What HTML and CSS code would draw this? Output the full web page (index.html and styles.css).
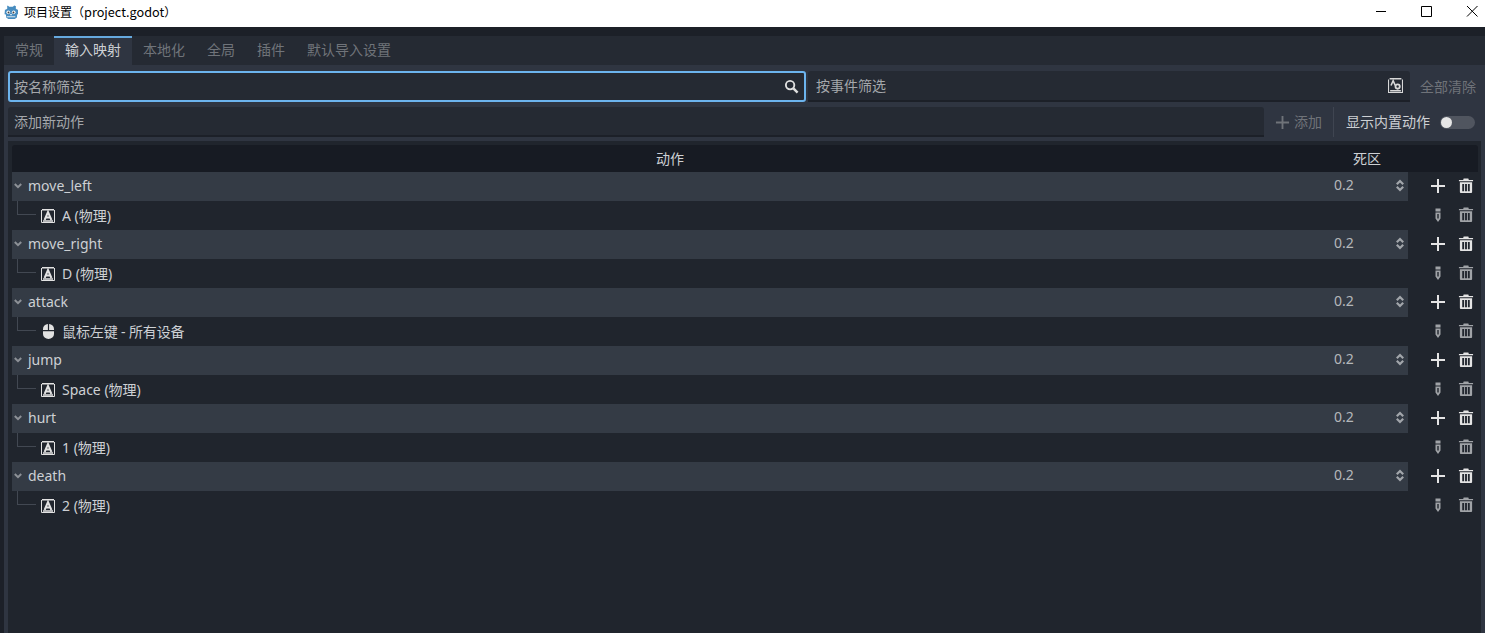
FILE: index.html
```html
<!DOCTYPE html>
<html lang="zh">
<head>
<meta charset="utf-8">
<title>项目设置</title>
<link rel="stylesheet" href="styles.css">
</head>
<body>
<svg class="defs" width="0" height="0" aria-hidden="true">
  <defs>
    <symbol id="key" viewBox="0 0 14 14">
      <path d="M.5 1v12.500h13V1" fill="none" stroke="currentColor" stroke-width="1"/>
      <path d="M1 .7h12M2 12h10" fill="none" stroke="currentColor" stroke-width="1.400"/>
      <path d="M3.600 11L7 3 10.400 11M5 8.400h4" fill="none" stroke="currentColor" stroke-width="2"/>
    </symbol>
    <symbol id="plus" viewBox="0 0 16 16">
      <path d="M8 1v14M1 8h14" fill="none" stroke="currentColor" stroke-width="2"/>
    </symbol>
    <symbol id="trash" viewBox="-.5 0 17 16">
      <path fill="currentColor" fill-rule="evenodd" d="M5.500 0h5l.5 1.500h4.500V3H.5V1.500H5zM1.500 4h13v10.500a1 1 0 0 1-1 1h-11a1 1 0 0 1-1-1zM4 6v7.500h2V6zM7 6v7.500h2V6zM10 6v7.500h2V6z"/>
    </symbol>
    <symbol id="pencil" viewBox="0 0 16 16">
      <path fill="currentColor" fill-rule="evenodd" d="M5.500 1.500h5v3h-5zM5.500 5.500h5v6L8 15l-2.500-3.500zM7.300 7v4.500h1.400V7z"/>
    </symbol>
    <symbol id="chev" viewBox="0 0 8 6">
      <path d="M.8 1l3.200 3.200L7.200 1" fill="none" stroke="currentColor" stroke-width="2"/>
    </symbol>
    <symbol id="updown" viewBox="0 0 8 13">
      <path d="M.8 5.200L4 2l3.200 3.200M.8 7.800L4 11l3.200-3.200" fill="none" stroke="currentColor" stroke-width="2.200"/>
    </symbol>
  </defs>
</svg>

<header class="titlebar">
  <div class="title-left">
    <svg class="godot" viewBox="1.500 1 13 13" aria-hidden="true">
      <path fill="#478cbf" d="M5 1.500l1.300 1.200h3.400L11 1.500l1.600.7-.2 2 1.400 1.200.8-.2.400 4.300-1.300.4-.2 2.600-2 1.500H5.500l-2-1.500-.2-2.600L2 9.500l.4-4.300.8.200 1.400-1.200-.2-2z"/>
      <circle cx="5.500" cy="7.800" r="1.700" fill="#fff"/>
      <circle cx="10.500" cy="7.800" r="1.700" fill="#fff"/>
      <circle cx="5.700" cy="8" r=".9" fill="#414042"/>
      <circle cx="10.300" cy="8" r=".9" fill="#414042"/>
      <path d="M7.200 9.300h1.600v1.300H7.200zM4 11.500h8v.8H4z" fill="#dfe9f2"/>
    </svg>
    <span class="title-text">项目设置（<span class="title-latin">project.godot</span>）</span>
  </div>
  <div class="win-btns">
    <svg class="win-btn" viewBox="0 0 45 27" aria-hidden="true"><path d="M26 11.500h10" stroke="#000" fill="none"/></svg>
    <svg class="win-btn" viewBox="0 0 45 27" aria-hidden="true"><path d="M26.500 6.500h10v10h-10z" stroke="#000" fill="none"/></svg>
    <svg class="win-btn" viewBox="0 0 45 27" aria-hidden="true"><path d="M27 6l10.500 10.500M37.500 6L27 16.500" stroke="#000" fill="none"/></svg>
  </div>
</header>

<main class="app">
  <nav class="tabs">
    <span class="tab tab-first">常规</span>
    <span class="tab tab-active">输入映射</span>
    <span class="tab">本地化</span>
    <span class="tab">全局</span>
    <span class="tab">插件</span>
    <span class="tab">默认导入设置</span>
  </nav>
  <section class="panel">
    <div class="filters">
      <div class="field field-focus">
        <span class="ph">按名称筛选</span>
        <svg class="search-icon" viewBox="0 0 16 16" aria-hidden="true"><circle cx="6.500" cy="6.500" r="4.500" fill="none" stroke="currentColor" stroke-width="2"/><path d="M10 10l4.500 4.500" stroke="currentColor" stroke-width="2.600" fill="none"/></svg>
      </div>
      <div class="field field-event">
        <span class="ph">按事件筛选</span>
        <svg class="event-icon" viewBox="0 0 14 14" aria-hidden="true"><path d="M.5 1.500v12h13v-12" fill="none" stroke="currentColor"/><path d="M1.500.7h11M2 12h10" fill="none" stroke="currentColor" stroke-width="1.400"/><path d="M2.800 7L4.800 2.500 6.800 7" fill="none" stroke="currentColor" stroke-width="1.500"/><circle cx="9" cy="8" r="2" fill="none" stroke="currentColor" stroke-width="1.700"/></svg>
      </div>
      <span class="clear-all">全部清除</span>
    </div>
    <div class="add-row">
      <div class="field field-add"><span class="ph">添加新动作</span></div>
      <span class="add-btn"><svg class="add-plus" aria-hidden="true"><use href="#plus"/></svg>添加</span>
      <span class="sep"></span>
      <span class="builtin">显示内置动作</span>
      <span class="toggle"><span class="knob"></span></span>
    </div>
    <div class="tree">
      <div class="tree-head"><span class="h-action">动作</span><span class="h-dead">死区</span></div>

      <div class="row row-action">
        <div class="cell-main"><svg class="chev" aria-hidden="true"><use href="#chev"/></svg><span>move_left</span><span class="dz">0.2</span><svg class="updown" aria-hidden="true"><use href="#updown"/></svg></div>
        <div class="btns"><svg class="bi" aria-hidden="true"><use href="#plus"/></svg><svg class="bi" aria-hidden="true"><use href="#trash"/></svg></div>
      </div>
      <div class="row row-event">
        <div class="cell-sub"><span class="guide"></span><svg class="key" aria-hidden="true"><use href="#key"/></svg><span>A (物理)</span></div>
        <div class="btns dim"><svg class="bi" aria-hidden="true"><use href="#pencil"/></svg><svg class="bi" aria-hidden="true"><use href="#trash"/></svg></div>
      </div>

      <div class="row row-action">
        <div class="cell-main"><svg class="chev" aria-hidden="true"><use href="#chev"/></svg><span>move_right</span><span class="dz">0.2</span><svg class="updown" aria-hidden="true"><use href="#updown"/></svg></div>
        <div class="btns"><svg class="bi" aria-hidden="true"><use href="#plus"/></svg><svg class="bi" aria-hidden="true"><use href="#trash"/></svg></div>
      </div>
      <div class="row row-event">
        <div class="cell-sub"><span class="guide"></span><svg class="key" aria-hidden="true"><use href="#key"/></svg><span>D (物理)</span></div>
        <div class="btns dim"><svg class="bi" aria-hidden="true"><use href="#pencil"/></svg><svg class="bi" aria-hidden="true"><use href="#trash"/></svg></div>
      </div>

      <div class="row row-action">
        <div class="cell-main"><svg class="chev" aria-hidden="true"><use href="#chev"/></svg><span>attack</span><span class="dz">0.2</span><svg class="updown" aria-hidden="true"><use href="#updown"/></svg></div>
        <div class="btns"><svg class="bi" aria-hidden="true"><use href="#plus"/></svg><svg class="bi" aria-hidden="true"><use href="#trash"/></svg></div>
      </div>
      <div class="row row-event">
        <div class="cell-sub"><span class="guide"></span><svg class="mouse" viewBox="0 0 11 15" aria-hidden="true"><path fill="currentColor" d="M4.900 0v6H0V5a5 5 0 0 1 4.900-5zM6.100 0A5 5 0 0 1 11 5v1H6.100zM0 7.200h11V10a5.500 5 0 0 1-11 0z"/></svg><span class="mouse-label">鼠标左键 - 所有设备</span></div>
        <div class="btns dim"><svg class="bi" aria-hidden="true"><use href="#pencil"/></svg><svg class="bi" aria-hidden="true"><use href="#trash"/></svg></div>
      </div>

      <div class="row row-action">
        <div class="cell-main"><svg class="chev" aria-hidden="true"><use href="#chev"/></svg><span>jump</span><span class="dz">0.2</span><svg class="updown" aria-hidden="true"><use href="#updown"/></svg></div>
        <div class="btns"><svg class="bi" aria-hidden="true"><use href="#plus"/></svg><svg class="bi" aria-hidden="true"><use href="#trash"/></svg></div>
      </div>
      <div class="row row-event">
        <div class="cell-sub"><span class="guide"></span><svg class="key" aria-hidden="true"><use href="#key"/></svg><span>Space (物理)</span></div>
        <div class="btns dim"><svg class="bi" aria-hidden="true"><use href="#pencil"/></svg><svg class="bi" aria-hidden="true"><use href="#trash"/></svg></div>
      </div>

      <div class="row row-action">
        <div class="cell-main"><svg class="chev" aria-hidden="true"><use href="#chev"/></svg><span>hurt</span><span class="dz">0.2</span><svg class="updown" aria-hidden="true"><use href="#updown"/></svg></div>
        <div class="btns"><svg class="bi" aria-hidden="true"><use href="#plus"/></svg><svg class="bi" aria-hidden="true"><use href="#trash"/></svg></div>
      </div>
      <div class="row row-event">
        <div class="cell-sub"><span class="guide"></span><svg class="key" aria-hidden="true"><use href="#key"/></svg><span>1 (物理)</span></div>
        <div class="btns dim"><svg class="bi" aria-hidden="true"><use href="#pencil"/></svg><svg class="bi" aria-hidden="true"><use href="#trash"/></svg></div>
      </div>

      <div class="row row-action">
        <div class="cell-main"><svg class="chev" aria-hidden="true"><use href="#chev"/></svg><span>death</span><span class="dz">0.2</span><svg class="updown" aria-hidden="true"><use href="#updown"/></svg></div>
        <div class="btns"><svg class="bi" aria-hidden="true"><use href="#plus"/></svg><svg class="bi" aria-hidden="true"><use href="#trash"/></svg></div>
      </div>
      <div class="row row-event">
        <div class="cell-sub"><span class="guide"></span><svg class="key" aria-hidden="true"><use href="#key"/></svg><span>2 (物理)</span></div>
        <div class="btns dim"><svg class="bi" aria-hidden="true"><use href="#pencil"/></svg><svg class="bi" aria-hidden="true"><use href="#trash"/></svg></div>
      </div>
    </div>
  </section>
</main>
</body>
</html>
```
FILE: styles.css
```css
* { box-sizing: border-box; }
html, body { margin: 0; height: 100%; overflow: hidden; }
body {
  display: flex;
  flex-direction: column;
  width: 1485px;
  height: 633px;
  font-family: "Noto Sans", "Noto Sans CJK SC", sans-serif;
  font-size: 14px;
  line-height: 20px;
  color: #cdd0d4;
  background: #1c2028;
}
.defs { position: absolute; }

.titlebar {
  flex: 0 0 27px;
  height: 27px;
  background: #fff;
  display: flex;
  justify-content: space-between;
  color: #000;
}
.title-left { display: flex; align-items: center; padding: 0 0 3px 4px; }
.godot { width: 14px; height: 14px; margin-right: 6px; }
.title-text { font-family: "Noto Sans CJK SC", sans-serif; font-size: 12px; white-space: nowrap; }
.title-latin { font-size: 12.7px; }
.win-btns { display: flex; }
.win-btn { width: 45px; height: 27px; }

.app {
  flex: 1;
  min-height: 0;
  display: flex;
  flex-direction: column;
  padding: 9px 0 0 4px;
}
.tabs {
  flex: 0 0 29px;
  display: flex;
  background: #252a33;
}
.tab {
  padding: 4px 11px 0;
  color: #70747a;
  white-space: nowrap;
}
.tab-first { padding-left: 11px; }
.tab-active {
  background: #2f3541;
  border-top: 2px solid #66a9de;
  padding-top: 2px;
  color: #cdd0d4;
}

.panel {
  flex: 1;
  min-height: 0;
  background: #2f3541;
  display: flex;
  flex-direction: column;
  padding: 6px 4px 0;
}
.filters { flex: 0 0 31px; display: flex; }
.field {
  display: flex;
  align-items: center;
  justify-content: space-between;
  background: #252a33;
  border-radius: 3px 3px 0 0;
  border-bottom: 2px solid #1c2028;
  padding: 0 6px;
  color: #a4a7ab;
}
.field-focus {
  width: 798px;
  border: 2px solid #6cb4ee;
  border-radius: 3px;
  padding: 0 5px 0 4px;
  color: #a4a7ab;
}
.search-icon { width: 15px; height: 15px; color: #e0e0e0; }
.field-event { width: 602px; margin-left: 2px; padding-left: 8px; padding-right: 7px; }
.event-icon { width: 15px; height: 15px; color: #d8d8d8; }
.clear-all { margin-left: 10px; color: #6f7379; line-height: 31px; white-space: nowrap; }

.add-row { flex: 0 0 30px; display: flex; align-items: center; margin-top: 5px; }
.field-add { width: 1256px; height: 30px; padding-top: 2px; }
.add-btn { display: flex; align-items: center; margin-left: 11px; color: #6f7379; white-space: nowrap; }
.add-plus { width: 15px; height: 15px; margin-right: 4px; }
.sep { width: 1px; height: 30px; background: #3f4551; margin-left: 11px; }
.builtin { margin-left: 12px; white-space: nowrap; color: #cdd0d4; }
.toggle {
  width: 35px;
  height: 13px;
  border-radius: 7px;
  background: #50555f;
  margin-left: 10px;
  display: flex;
  align-items: center;
  padding-left: 1px;
}
.knob { width: 11px; height: 11px; border-radius: 50%; background: #e6e6e6; }

.tree {
  flex: 1;
  min-height: 0;
  margin-top: 4px;
  padding: 4px 3px 0 4px;
  background: #20252d;
}
.tree-head {
  height: 27px;
  background: #171b23;
  border-radius: 3px 3px 0 0;
  display: flex;
  align-items: center;
  color: #cdd0d4;
}
.h-action { width: 1316px; text-align: center; }
.h-dead { width: 78px; text-align: center; }
.row { height: 29px; display: flex; align-items: stretch; }
.row-action .cell-main {
  width: 1396px;
  background: #343b45;
  display: flex;
  align-items: center;
  padding-bottom: 2px;
  color: #cdd0d4;
}
.chev { width: 8px; height: 6px; margin-left: 2px; margin-right: 6px; color: #8d9197; }
.dz { margin-left: auto; color: #b4b7ba; width: 62px; margin-bottom: 1px; }
.updown { width: 8px; height: 13px; margin-right: 4px; color: #a2a6ab; }
.cell-sub {
  width: 1396px;
  display: flex;
  align-items: center;
  position: relative;
  padding-left: 29px;
}
.guide {
  position: absolute;
  left: 5px;
  top: 0;
  width: 19px;
  height: 14px;
  border-left: 1px solid #424852;
  border-bottom: 1px solid #424852;
}
.key { width: 14px; height: 14px; margin-right: 7px; color: #e2e2e2; }
.mouse { width: 11px; height: 15px; margin: 0 8px 0 2px; color: #e2e2e2; }
.mouse-label { letter-spacing: -.12px; }
.btns { flex: 1; display: flex; align-items: center; color: #e4e4e4; padding-left: 22px; gap: 12px; padding-bottom: 2px; }
.bi { width: 16px; height: 16px; flex: none; }
.dim { color: #a0a3a7; }
```
